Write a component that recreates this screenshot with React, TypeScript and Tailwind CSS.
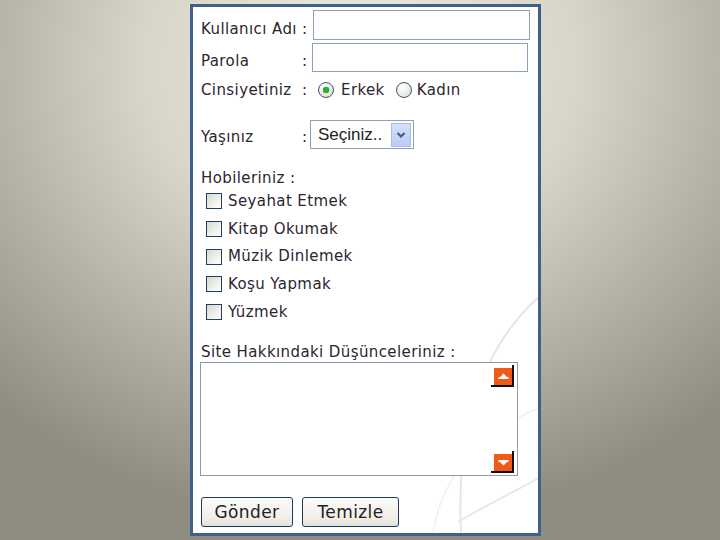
import React from "react";

const hobbies = ["Seyahat Etmek", "Kitap Okumak", "Müzik Dinlemek", "Koşu Yapmak", "Yüzmek"];

const Radio = ({ checked }: { checked?: boolean }) => (
	<span className="relative flex items-center justify-center w-[16px] h-[16px] rounded-full border border-[#3b5878] bg-[radial-gradient(circle_at_40%_35%,#ffffff_0%,#e9e9e4_60%,#cfd0c8_100%)]">
		{checked && <span className="w-[6px] h-[6px] rounded-full bg-[#2fae2f] shadow-[0_0_1px_#1a7a1a]" />}
	</span>
);

const Checkbox = () => (
	<span className="block w-[16px] h-[16px] border border-[#21405f] bg-[linear-gradient(135deg,#d8d8d2_0%,#f1f1ec_60%,#ffffff_100%)]" />
);

const ScrollBtn = ({ up }: { up?: boolean }) => (
	<div className="flex justify-end">
		<div className="border-r-2 border-b-2 border-[#111] pl-[3px] pt-[3px]">
			<div className="flex items-center justify-center w-[18px] h-[17px] bg-[#ef5b16]">
				<svg width="11" height="7" viewBox="0 0 11 7">
					{up ? (
						<path d="M5.5 0.5 L9 4 L10.5 4 L10.5 6 L0.5 6 L0.5 4 L2 4 Z" fill="#fff" />
					) : (
						<path d="M0.5 1 L10.5 1 L10.5 3 L9 3 L5.5 6.5 L2 3 L0.5 3 Z" fill="#fff" />
					)}
				</svg>
			</div>
		</div>
	</div>
);

export default function App() {
	return (
		<div className="w-[720px] h-[540px] overflow-hidden bg-[radial-gradient(ellipse_75%_85%_at_50%_12%,#eeede2_0%,#d8d6c8_40%,#b3b1a3_70%,#8f8d80_100%)] pt-[4px] font-['DejaVu_Sans',sans-serif] text-[15px] tracking-[0.4px] text-[#2b2630]">
			<div className="relative ml-[190px] w-[351px] h-[532px] border-[3px] border-[#40608a] bg-white">
				{/* faint background arcs */}
				<svg className="absolute inset-0" width="345" height="526" viewBox="0 0 345 526">
					<path d="M348 288 C 300 330, 262 400, 268 526" fill="none" stroke="#e7e6e2" strokeWidth="2" />
					<path d="M348 470 C 320 485, 290 500, 265 515" fill="none" stroke="#e9e8e4" strokeWidth="2" />
					<path d="M348 400 C 300 420, 250 460, 240 526" fill="none" stroke="#f1f0ec" strokeWidth="1.5" />
				</svg>

				<div className="relative flex flex-col pl-[8px] pt-[3px]">
					{/* Kullanıcı Adı */}
					<div className="flex items-end h-[30px]">
						<span className="w-[112px] pb-[2px] whitespace-nowrap leading-[18px]">Kullanıcı Adı :</span>
						<div className="w-[217px] h-[30px] border border-[#8ca0b8] bg-white" />
					</div>

					{/* Parola */}
					<div className="flex items-end h-[29px] mt-[3px]">
						<span className="flex w-[111px] pb-[2px] leading-[18px]">
							<span className="w-[101px]">Parola</span>:
						</span>
						<div className="w-[216px] h-[29px] border border-[#8ca0b8] bg-white" />
					</div>

					{/* Cinsiyetiniz */}
					<div className="flex items-center h-[20px] mt-[8px]">
						<span className="flex w-[117px] leading-[18px]">
							<span className="w-[101px]">Cinsiyetiniz</span>:
						</span>
						<Radio checked />
						<span className="ml-[7px]">Erkek</span>
						<span className="ml-[11px]">
							<Radio />
						</span>
						<span className="ml-[5px]">Kadın</span>
					</div>

					{/* Yaşınız */}
					<div className="flex items-end h-[29px] mt-[20px]">
						<span className="flex w-[109px] pb-[3px] leading-[18px]">
							<span className="w-[101px]">Yaşınız</span>:
						</span>
						<div className="flex items-center w-[104px] h-[29px] border border-[#8ca0b8] bg-white pl-[7px] pr-[2px]">
							<span className="flex-1 font-['Liberation_Sans',sans-serif] text-[17px] tracking-normal text-[#222] leading-none">Seçiniz..</span>
							<span className="flex items-center justify-center w-[20px] h-[24px] bg-[linear-gradient(180deg,#d4e0fb_0%,#b9cbf5_100%)] border border-[#aebde0]">
								<svg width="10" height="8" viewBox="0 0 10 8">
									<path d="M1.5 2 L5 5.5 L8.5 2" fill="none" stroke="#4a5a7c" strokeWidth="2.2" />
								</svg>
							</span>
						</div>
					</div>

					{/* Hobileriniz */}
					<div className="h-[18px] leading-[18px] mt-[20px]">Hobileriniz :</div>
					<div className="flex flex-col gap-[7.75px] mt-[4px] pl-[5px]">
						{hobbies.map((h) => (
							<label key={h} className="flex items-center h-[20px]">
								<Checkbox />
								<span className="ml-[6px]">{h}</span>
							</label>
						))}
					</div>

					{/* Düşünceler */}
					<div className="h-[18px] leading-[18px] mt-[21px] whitespace-nowrap">Site Hakkındaki Düşünceleriniz :</div>
					<div className="flex flex-col justify-between ml-[-1px] mt-[1px] w-[318px] h-[114px] border border-[#8a9cb2] bg-white pt-[2px] pr-[3px] pb-[2px]">
						<ScrollBtn up />
						<ScrollBtn />
					</div>

					{/* Buttons */}
					<div className="flex gap-[9px] mt-[21px]">
						<button className="w-[92px] h-[30px] rounded-[3px] border border-[#1d3a58] bg-[linear-gradient(180deg,#fbfbf8_0%,#f0efe9_70%,#e2e1da_100%)] text-[17px] text-[#222] leading-none">
							Gönder
						</button>
						<button className="w-[97px] h-[30px] rounded-[3px] border border-[#1d3a58] bg-[linear-gradient(180deg,#fbfbf8_0%,#f0efe9_70%,#e2e1da_100%)] text-[17px] text-[#222] leading-none">
							Temizle
						</button>
					</div>
				</div>
			</div>
		</div>
	);
}
